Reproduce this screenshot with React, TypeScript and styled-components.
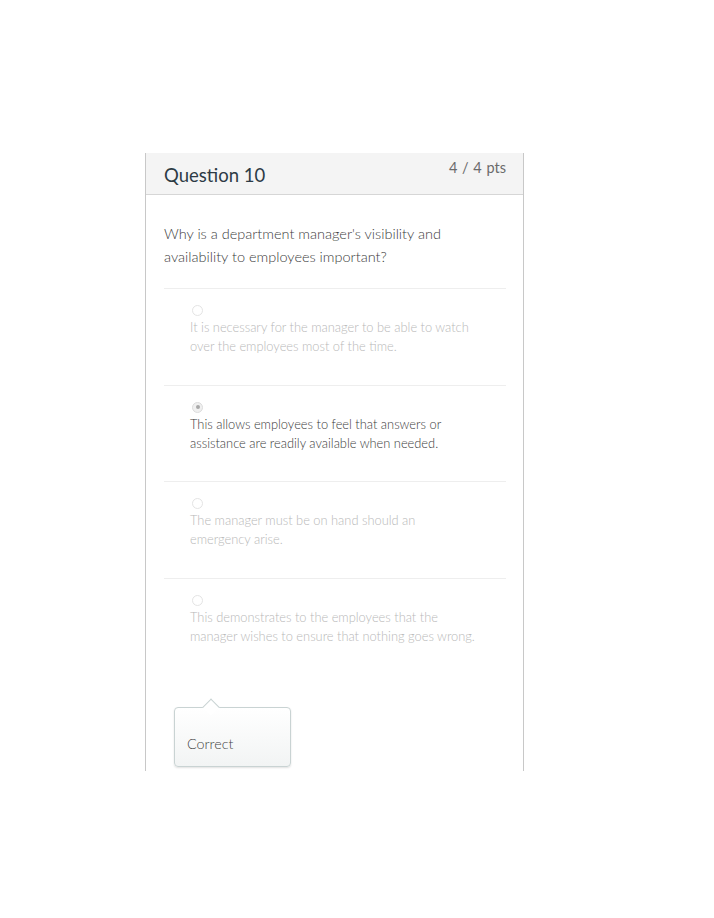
import React from "react";
import styled, { createGlobalStyle } from "styled-components";

const Global = createGlobalStyle`
  html, body { margin: 0; padding: 0; background: #fff; }
  body { font-family: Lato, "Open Sans", sans-serif; }
`;

const Page = styled.div`
  padding: 153px 0 0 145px;
  height: 918px;
  box-sizing: border-box;
`;

const Card = styled.div`
  width: 379px;
  height: 618px;
  box-sizing: border-box;
  border-left: 1px solid #c8c8c8;
  border-right: 1px solid #c8c8c8;
`;

const Header = styled.div`
  height: 42px;
  box-sizing: border-box;
  background: #f4f4f4;
  border-bottom: 1px solid #d6d6d6;
  display: flex;
  justify-content: space-between;
  padding: 0 17px 0 18px;
`;

const Title = styled.div`
  font-size: 18.5px;
  color: #2d3b45;
  padding-top: 11px;
`;

const Points = styled.div`
  font-size: 14.5px;
  color: #6b6b6b;
  padding-top: 6px;
  word-spacing: 1px;
`;

const Body = styled.div`
  padding: 0 17px 0 18px;
  display: flex;
  flex-direction: column;
`;

const Prompt = styled.p`
  margin: 27px 0 20px;
  font-size: 14.5px;
  line-height: 23px;
  color: #3d3d3d;
  font-weight: 300;
`;

const Answer = styled.div`
  border-top: 1px solid #eeeeee;
  height: 96.5px;
  box-sizing: border-box;
  padding: 16px 0 0 26px;
  display: flex;
  flex-direction: column;
`;

const Radio = styled.span<{ $checked?: boolean }>`
  width: 9px;
  height: 9px;
  border-radius: 50%;
  border: 1px solid ${(p) => (p.$checked ? "#dcdcdc" : "#e4e4e4")};
  background: ${(p) => (p.$checked ? "#f0f0f0" : "transparent")};
  margin-left: 2px;
  margin-bottom: 2px;
  display: flex;
  align-items: center;
  justify-content: center;
  &::after {
    content: "";
    width: 4px;
    height: 4px;
    border-radius: 50%;
    background: ${(p) => (p.$checked ? "#a8a8a8" : "transparent")};
  }
`;

const AnswerText = styled.div<{ $selected?: boolean }>`
  font-size: 12.85px;
  line-height: 19px;
  font-weight: 300;
  color: ${(p) => (p.$selected ? "#3a3a3a" : "#b8b8b8")};
`;

const Feedback = styled.div`
  position: relative;
  margin: 33px 0 0 10px;
  width: 117px;
  height: 60px;
  box-sizing: border-box;
  border: 1px solid #c9d3d3;
  border-radius: 4px;
  background: linear-gradient(#ffffff, #f2f4f4);
  box-shadow: 0 1px 2px rgba(0, 0, 0, 0.12);
  padding: 27px 0 0 12px;
  font-size: 14.3px;
  font-weight: 300;
  color: #444;
  &::before {
    content: "";
    position: absolute;
    left: 30px;
    top: -7px;
    width: 11px;
    height: 11px;
    background: #fff;
    border-left: 1px solid #c9d3d3;
    border-top: 1px solid #c9d3d3;
    transform: rotate(45deg);
  }
`;

const answers: { lines: [string, string]; selected: boolean }[] = [
  {
    lines: ["It is necessary for the manager to be able to watch", "over the employees most of the time."],
    selected: false,
  },
  {
    lines: ["This allows employees to feel that answers or", "assistance are readily available when needed."],
    selected: true,
  },
  {
    lines: ["The manager must be on hand should an", "emergency arise."],
    selected: false,
  },
  {
    lines: ["This demonstrates to the employees that the", "manager wishes to ensure that nothing goes wrong."],
    selected: false,
  },
];

export default function App() {
  return (
    <>
      <Global />
      <Page>
        <Card>
          <Header>
            <Title>Question 10</Title>
            <Points>4 / 4 pts</Points>
          </Header>
          <Body>
            <Prompt>
              Why is a department manager's visibility and
              <br />
              availability to employees important?
            </Prompt>
            {answers.map((a, i) => (
              <Answer key={i}>
                <Radio $checked={a.selected} />
                <AnswerText $selected={a.selected}>
                  {a.lines[0]}
                  <br />
                  {a.lines[1]}
                </AnswerText>
              </Answer>
            ))}
            <Feedback>Correct</Feedback>
          </Body>
        </Card>
      </Page>
    </>
  );
}
